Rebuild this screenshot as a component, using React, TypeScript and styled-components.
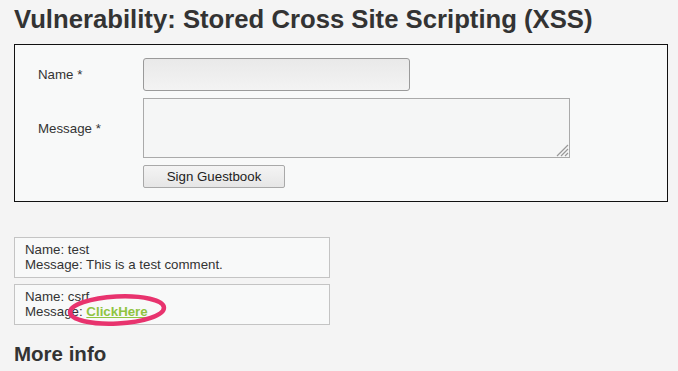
import React from "react";
import styled, { createGlobalStyle } from "styled-components";

const Global = createGlobalStyle`
  html, body { margin: 0; padding: 0; background: #f4f4f4; }
  body { font-family: "Liberation Sans", Arial, sans-serif; color: #333; font-size: 13.3px; }
`;

const Page = styled.div`
  padding: 0 14px;
  width: 654px;
`;

const Title = styled.h1`
  margin: 0;
  padding-top: 3px;
  font-size: 25.7px;
  line-height: 32px;
  font-weight: bold;
  color: #333;
  height: 41px;
`;

const FormBox = styled.div`
  border: 1px solid #111;
  background: #f8f9f9;
  padding: 13px 0 13px 23px;
  display: grid;
  grid-template-columns: 105px 1fr;
  row-gap: 7px;
  align-items: center;
`;

const Label = styled.label`
  font-size: 13.3px;
  line-height: 15px;
  color: #333;
`;

const NameInput = styled.div`
  width: 265px;
  height: 31px;
  border: 1px solid #9a9a9a;
  border-radius: 3px;
  background: linear-gradient(#e9e9e9, #f3f3f3);
`;

const MessageArea = styled.div`
  position: relative;
  width: 425px;
  height: 58px;
  border: 1px solid #aaa;
  background: #f5f6f6;
`;

const Grip = styled.svg`
  position: absolute;
  right: 0;
  bottom: 0;
`;

const Button = styled.div`
  grid-column: 2;
  width: 140px;
  height: 21px;
  border: 1px solid #a9a9a9;
  border-radius: 2px;
  background: linear-gradient(#f4f4f4, #e6e6e6);
  display: flex;
  align-items: center;
  justify-content: center;
  font-size: 13.3px;
  color: #222;
`;

const Comments = styled.div`
  margin-top: 35px;
  display: flex;
  flex-direction: column;
  gap: 6px;
`;

const Comment = styled.div`
  position: relative;
  width: 304px;
  height: 30px;
  padding: 4px 0 5px 10px;
  border: 1px solid #c4c4c4;
  background: #f8f9f9;
  font-size: 13.3px;
  line-height: 15px;
  color: #333;
`;

const Link = styled.a`
  color: #8fc43f;
  font-weight: bold;
  text-decoration: underline;
`;

const Ring = styled.svg`
  position: absolute;
  left: 52px;
  top: 9px;
  overflow: visible;
`;

const SubTitle = styled.h2`
  margin: 0;
  padding-top: 17px;
  font-size: 20.5px;
  line-height: 24px;
  font-weight: bold;
  color: #333;
`;

export default function App() {
  return (
    <>
      <Global />
      <Page>
        <Title>Vulnerability: Stored Cross Site Scripting (XSS)</Title>
        <FormBox>
          <Label>Name *</Label>
          <NameInput />
          <Label>Message *</Label>
          <MessageArea>
            <Grip width="13" height="13" viewBox="0 0 13 13">
              <path d="M12 1 L1 12 M12 5 L5 12 M12 9 L9 12" stroke="#999" strokeWidth="1.2" />
            </Grip>
          </MessageArea>
          <Button>Sign Guestbook</Button>
        </FormBox>
        <Comments>
          <Comment>
            Name: test
            <br />
            Message: This is a test comment.
          </Comment>
          <Comment>
            Name: csrf
            <br />
            Message: <Link href="#">ClickHere</Link>
            <Ring width="100" height="32" viewBox="0 0 100 32">
              <ellipse cx="50" cy="16" rx="47" ry="13.5" fill="none" stroke="#e8336e" strokeWidth="4.5" transform="rotate(-3 50 16)" />
            </Ring>
          </Comment>
        </Comments>
        <SubTitle>More info</SubTitle>
      </Page>
    </>
  );
}
